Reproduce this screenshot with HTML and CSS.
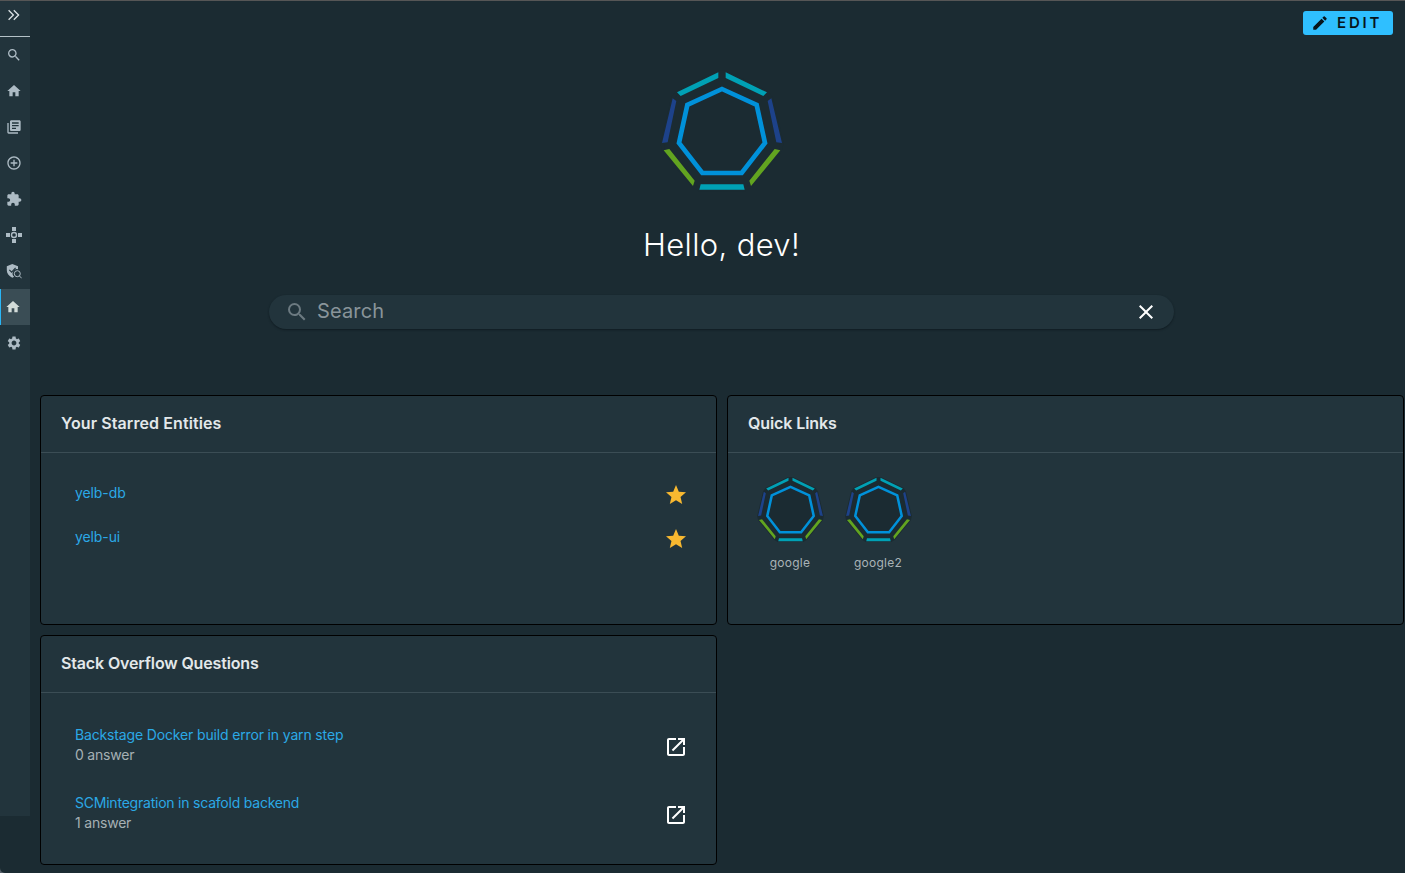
FILE: index.html
```
<!DOCTYPE html>
<html lang="en">
<head>
<meta charset="utf-8">
<title>Home</title>
<link rel="stylesheet" href="styles.css">
</head>
<body>
<svg class="defs" width="0" height="0">
  <symbol id="logo" viewBox="60 30 372 366">
    <path class="logo-base" d="M235 37H257L381 97 394 115 426 249 421 271 333 378 314 389H178L159 378 71 271 66 249 98 115 111 97Z"/>
    <path fill="#00a1b5" d="M111 97 235 37V54L122 108ZM257 37 381 97 370 108 257 54ZM182 373H310L314 389H178Z"/>
    <path fill="#1d428a" d="M98 115 109 123 83 247 66 249ZM394 115 383 123 409 247 426 249Z"/>
    <path fill="#62a420" d="M71 271 88 267 164 362 159 378ZM421 271 404 267 328 362 333 378Z"/>
    <path fill="none" stroke="#0091da" stroke-width="14" d="M246 87 350 135 375 249 305 339H187L117 249 142 135Z"/>
  </symbol>
  <symbol id="home" viewBox="0 0 24 24"><path d="M10 20v-6h4v6h5v-8h3L12 3 2 12h3v8z"/></symbol>
  <symbol id="search" viewBox="0 0 24 24"><path d="M15.5 14h-.79l-.28-.27A6.471 6.471 0 0 0 16 9.5 6.5 6.5 0 1 0 9.5 16c1.61 0 3.09-.59 4.23-1.57l.27.28v.79l5 4.99L20.49 19l-4.99-5zm-6 0C7.01 14 5 11.99 5 9.5S7.01 5 9.5 5 14 7.01 14 9.5 11.99 14 9.5 14z"/></symbol>
  <symbol id="star" viewBox="0 0 24 24"><path d="M12 17.27 18.18 21l-1.64-7.03L22 9.24l-7.19-.61L12 2 9.19 8.63 2 9.24l5.46 4.73L5.82 21z"/></symbol>
  <symbol id="open" viewBox="0 0 24 24"><path d="M19 19H5V5h7V3H5c-1.110 0-2 .9-2 2v14c0 1.100.89 2 2 2h14c1.100 0 2-.9 2-2v-7h-2v7zM14 3v2h3.590l-9.830 9.830 1.410 1.410L19 6.410V10h2V3h-7z"/></symbol>
</svg>
<div class="page">
  <nav class="sidebar">
    <a class="toggle"><svg viewBox="0 0 16 16"><path fill="none" stroke="currentColor" stroke-width="1.3" d="M2.600 3.200 7.400 8 2.600 12.800M7.800 3.200 12.600 8 7.800 12.800"/></svg></a>
    <a class="item"><svg><use href="#search"/></svg></a>
    <a class="item"><svg><use href="#home"/></svg></a>
    <a class="item"><svg viewBox="0 0 24 24"><path d="M4 6H2v14c0 1.100.9 2 2 2h14v-2H4V6zm16-4H8c-1.100 0-2 .9-2 2v12c0 1.100.9 2 2 2h12c1.100 0 2-.9 2-2V4c0-1.100-.9-2-2-2zm-1 9H9V9h10v2zm-4 4H9v-2h6v2zm4-8H9V5h10v2z"/></svg></a>
    <a class="item"><svg viewBox="0 0 24 24"><path d="M13 7h-2v4H7v2h4v4h2v-4h4v-2h-4V7zm-1-5C6.480 2 2 6.480 2 12s4.480 10 10 10 10-4.480 10-10S17.520 2 12 2zm0 18c-4.410 0-8-3.590-8-8s3.590-8 8-8 8 3.590 8 8-3.590 8-8 8z"/></svg></a>
    <a class="item"><svg viewBox="0 0 24 24"><path d="M20.500 11H19V7c0-1.100-.9-2-2-2h-4V3.500C13 2.120 11.880 1 10.500 1S8 2.120 8 3.500V5H4c-1.100 0-1.990.9-1.990 2v3.800H3.500c1.490 0 2.700 1.210 2.700 2.700s-1.210 2.700-2.700 2.700H2V20c0 1.100.9 2 2 2h3.800v-1.500c0-1.490 1.210-2.700 2.700-2.700 1.490 0 2.700 1.210 2.700 2.700V22H17c1.100 0 2-.9 2-2v-4h1.500c1.380 0 2.500-1.120 2.500-2.500S21.880 11 20.500 11z"/></svg></a>
    <a class="item"><svg viewBox="0 0 16 16"><path d="M6 0h4v4H6zM6 12h4v4H6zM0 6h4v4H0zM12 6h4v4h-4z"/><circle cx="8" cy="8" r="2.500" fill="none" stroke="currentColor" stroke-width="1.400"/></svg></a>
    <a class="item"><svg viewBox="0 0 16 16"><path d="M6.300.9 12 3.200V6.200A4.300 4.300 0 0 0 8.200 13.700L6.300 14.800C2.800 12.900.8 10.100.8 7.200V3.200Z"/><path fill="none" stroke="#22343c" stroke-width="1.200" d="m3.300 6.900 2.300 2.200 4-4.200"/><circle cx="11.300" cy="10.700" r="3" fill="none" stroke="currentColor"/><path fill="none" stroke="currentColor" d="m13.400 12.900 2.300 2.400"/></svg></a>
    <a class="item active"><svg><use href="#home"/></svg></a>
    <a class="item"><svg viewBox="0 0 24 24"><path d="M19.140 12.940c.04-.3.060-.61.060-.94 0-.32-.02-.64-.07-.94l2.030-1.580c.18-.14.230-.41.120-.61l-1.920-3.320c-.12-.22-.37-.29-.59-.22l-2.390.96c-.5-.38-1.030-.7-1.620-.94l-.36-2.540c-.04-.24-.24-.41-.48-.41h-3.840c-.24 0-.43.170-.47.410l-.36 2.540c-.59.240-1.130.570-1.620.940l-2.390-.96c-.22-.08-.47 0-.59.220L2.740 8.870c-.12.210-.08.470.12.610l2.030 1.580c-.05.300-.09.630-.09.940s.02.640.070.940l-2.030 1.580c-.18.140-.23.410-.12.610l1.920 3.320c.12.220.37.290.59.220l2.390-.96c.5.380 1.030.7 1.620.94l.36 2.540c.05.240.24.410.48.410h3.840c.24 0 .44-.17.470-.41l.36-2.540c.59-.24 1.130-.56 1.620-.94l2.390.96c.22.080.47 0 .59-.22l1.920-3.320c.12-.22.070-.47-.12-.61l-2.010-1.580zM12 15.600c-1.980 0-3.600-1.620-3.600-3.600s1.620-3.600 3.600-3.600 3.600 1.620 3.600 3.600-1.620 3.600-3.600 3.600z"/></svg></a>
  </nav>
  <main class="main">
    <header class="toolbar">
      <button class="edit"><svg viewBox="0 0 24 24"><path d="M3 17.250V21h3.750L17.810 9.940l-3.750-3.750L3 17.250zM20.710 7.040c.39-.39.39-1.020 0-1.410l-2.340-2.340a.996.996 0 0 0-1.410 0l-1.830 1.830 3.750 3.750 1.830-1.830z"/></svg><span>EDIT</span></button>
    </header>
    <section class="hero">
      <svg class="hero-logo"><use href="#logo"/></svg>
      <h1 class="greeting">Hello, dev!</h1>
      <div class="searchbar">
        <svg class="glass"><use href="#search"/></svg>
        <span class="placeholder">Search</span>
        <svg class="clear" viewBox="0 0 24 24"><path d="M19 6.410 17.590 5 12 10.590 6.410 5 5 6.410 10.590 12 5 17.590 6.410 19 12 13.410 17.590 19 19 17.590 13.410 12z"/></svg>
      </div>
    </section>
    <section class="cards">
      <article class="card">
        <h2 class="title"><span class="t-starred">Your Starred Entities</span></h2>
        <ul class="list starred">
          <li class="row"><a class="link">yelb-db</a><svg class="star"><use href="#star"/></svg></li>
          <li class="row"><a class="link">yelb-ui</a><svg class="star"><use href="#star"/></svg></li>
        </ul>
      </article>
      <article class="card">
        <h2 class="title"><span class="t-quick">Quick Links</span></h2>
        <div class="links">
          <a class="quick"><svg><use href="#logo"/></svg><span>google</span></a>
          <a class="quick"><svg><use href="#logo"/></svg><span>google2</span></a>
        </div>
      </article>
      <article class="card">
        <h2 class="title"><span class="t-stack">Stack Overflow Questions</span></h2>
        <ul class="list questions">
          <li class="row"><div><a class="link q-one">Backstage Docker build error in yarn step</a><p class="answers">0 answer</p></div><svg class="open"><use href="#open"/></svg></li>
          <li class="row"><div><a class="link q-two">SCMintegration in scafold backend</a><p class="answers">1 answer</p></div><svg class="open"><use href="#open"/></svg></li>
        </ul>
      </article>
    </section>
  </main>
</div>
</body>
</html>
```
FILE: styles.css
```
* { box-sizing: border-box; }
html { background: #56606a; }
body { margin: 0; font-family: Inter, "Open Sans", sans-serif; color: #e3e8ea; }
h1, h2, p, ul { margin: 0; padding: 0; }
ul { list-style: none; }
svg { fill: currentColor; flex: none; display: block; }
.defs { display: none; }
.logo-base { fill: #1b2b32; stroke: #1b2b32; stroke-width: 10; stroke-linejoin: round; }
.page { display: flex; height: 873px; background: #1b2b32; border-top: 1px solid #565656; border-bottom-left-radius: 5px; overflow: hidden; }
.sidebar { width: 30px; height: 815px; flex: none; background: #22343c; color: #adbbc4; }
.toggle { height: 36px; display: flex; padding: 6px; border-bottom: 1px solid #b5c2c8; color: #dce3e6; }
.toggle svg, .item svg { width: 16px; height: 16px; }
.item { height: 36px; display: flex; align-items: center; padding-left: 6px; }
.active { background: #3a4d55; border-left: 1px solid #29b6f6; padding-left: 4px; color: #d2dcd9; }
.main { flex: 1; min-width: 0; }
.toolbar { height: 70px; display: flex; justify-content: flex-end; padding: 10px 12px; }
.edit { width: 90px; height: 24px; border: 0; border-radius: 3px; background: #2fbfff; color: #07151c; display: flex; align-items: center; padding: 0 0 0 8px; font: 600 15px/24px Inter, sans-serif; letter-spacing: 2.8px; }
.edit svg { width: 18px; height: 18px; margin-right: 8px; }
.hero { height: 324px; display: flex; flex-direction: column; align-items: center; margin-left: 8px; }
.hero-logo { width: 124px; height: 122px; margin-top: -1px; }
.greeting { margin-top: 33px; font-size: 31px; line-height: 40px; font-weight: 300; color: #fff; letter-spacing: .35px; white-space: nowrap; }
.searchbar { width: 905px; height: 34px; margin-top: 30px; border-radius: 17px; background: #22343c; box-shadow: 0 1px 2px #101c22; display: flex; align-items: center; padding: 0 16px; }
.glass { width: 24px; height: 24px; color: #6c7a81; }
.placeholder { flex: 1; margin-left: 8px; padding-bottom: 2px; font-size: 20px; line-height: 30px; letter-spacing: .15px; color: #89949a; }
.clear { width: 24px; height: 24px; color: #fff; }
.cards { display: grid; grid-template-columns: 677px 677px; grid-auto-rows: 230px; gap: 10px; padding-left: 10px; }
.card { background: #22343c; border: 1px solid #000; border-radius: 4px; }
.title { height: 57px; padding-left: 20px; border-bottom: 1px solid #3b4d55; font-size: 16px; line-height: 55px; font-weight: 600; }
.t-starred { letter-spacing: .09px; }
.t-quick { letter-spacing: -.1px; }
.t-stack { letter-spacing: -.15px; }
.list { padding: 20px 28px 0 34px; }
.row { display: flex; align-items: center; justify-content: space-between; height: 44px; font-size: 14px; line-height: 20px; }
.starred .link, .questions .row > div { padding-bottom: 4px; }
.questions .row { height: 68px; }
.link { color: #2ba9e6; letter-spacing: -.1px; }
.q-one { letter-spacing: -.15px; }
.q-two { letter-spacing: -.22px; }
.answers { color: #a6b0b4; letter-spacing: -.2px; }
.star { width: 24px; height: 24px; color: #f8b830; }
.open { width: 24px; height: 24px; color: #fff; }
.links { display: flex; padding: 23px 0 0 18px; }
.quick { width: 88px; display: flex; flex-direction: column; align-items: center; font-size: 12px; line-height: 18px; letter-spacing: .25px; color: #a9b3b7; }
.quick svg { width: 67px; height: 67px; margin-bottom: 11px; }
```
